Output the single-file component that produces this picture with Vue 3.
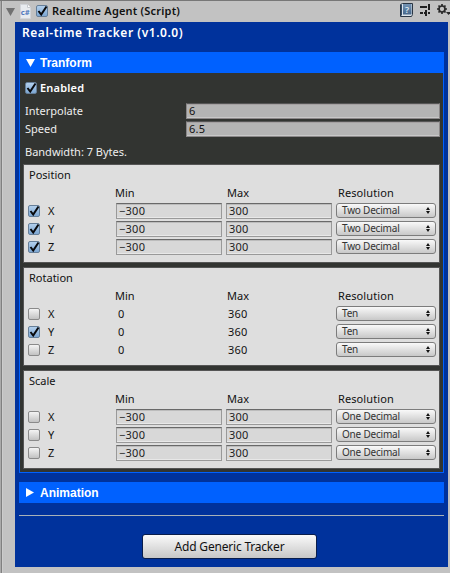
<script setup>
import { ref } from 'vue'

const axes = (on, min, max, resolution) =>
  ['X', 'Y', 'Z'].map((name, i) => ({ name, on: on[i], min, max, resolution }))

const groups = ref([
  { title: 'Position', editable: true, rows: axes([true, true, true], '-300', '300', 'Two Decimal') },
  { title: 'Rotation', editable: false, rows: axes([false, true, false], '0', '360', 'Ten') },
  { title: 'Scale', editable: true, rows: axes([false, false, false], '-300', '300', 'One Decimal') },
])
const settings = [
  { label: 'Interpolate', value: '6' },
  { label: 'Speed', value: '6.5' },
]
const shown = (v) => v.replace('-', '−')
</script>

<template>
  <main class="inspector">
    <header class="component-bar">
      <svg class="fold" width="9" height="8" viewBox="0 0 9 8"><path d="M0 0h9L4.5 8z" fill="#717171" /></svg>
      <svg class="script-icon" width="11" height="15" viewBox="0 0 11 15">
        <path d="M.5 .5h7l3 3v11H.5z" fill="#e8ebef" stroke="#d2d5da" />
        <path d="M7.5 .5v3h3" fill="#fff" stroke="#c5c9ce" />
        <text x="0.8" y="10.8" font-size="7" font-weight="700" textLength="9" lengthAdjust="spacingAndGlyphs" fill="#5279bd">c#</text>
      </svg>
      <span class="check on"><svg width="14" height="14" viewBox="0 0 14 14"><path d="M3.500 7l2.700 3.500L11.500 2.500" /></svg></span>
      <b class="component-name">Realtime Agent (Script)</b>
      <div class="tools">
        <svg width="13" height="14" viewBox="0 0 13 14">
          <defs><linearGradient id="book" x2="0" y2="1"><stop stop-color="#7595b5" /><stop offset="1" stop-color="#456589" /></linearGradient></defs>
          <path d="M.5 1.500l2-1h10v11l-1 2H.5z" fill="#dce4eb" stroke="#2a3644" />
          <path d="M3 1h8.500v10.500H3z" fill="url(#book)" />
          <path d="M1.500 1.500v11" stroke="#304b68" />
          <text x="5" y="9.500" font-size="9" font-weight="600" fill="#dce9f4">?</text>
        </svg>
        <svg width="10" height="12" viewBox="0 0 10 12" fill="#202020">
          <path d="M0 2h7v2H0zM8 0h2v6H8zM0 8h3v2H0zM5 6h2v6H5zM4 8h1v2H4zM8 8h2v2H8z" />
        </svg>
        <svg width="13" height="12" viewBox="0 0 13 12">
          <circle cx="5" cy="5" r="3" fill="none" stroke="#292929" stroke-width="1.700" />
          <path d="M5 0v2M5 8v2M0 5h2M8 5h2M1.500 1.500l1.300 1.300M7.200 7.200l1.300 1.300M1.500 8.500l1.300-1.300M7.200 2.800l1.300-1.300" stroke="#292929" stroke-width="1.700" />
          <path d="M9 8h5l-2.500 3z" fill="#292929" />
        </svg>
      </div>
    </header>

    <div class="tracker">
      <h1>Real-time Tracker (v1.0.0)</h1>
      <section class="module">
        <h2><svg width="9" height="8" viewBox="0 0 9 8"><path d="M0 0h9L4.500 8z" fill="#fff" /></svg><span>Tranform</span></h2>
        <div class="module-body">
          <label class="enabled">
            <span class="check on"><svg width="14" height="14" viewBox="0 0 14 14"><path d="M3.500 7l2.700 3.500L11.500 2.500" /></svg></span>
            <b>Enabled</b>
          </label>
          <div v-for="s in settings" :key="s.label" class="setting">
            <span>{{ s.label }}</span><span class="field">{{ s.value }}</span>
          </div>
          <p class="bandwidth">Bandwidth: 7 Bytes.</p>

          <div class="groups">
            <div v-for="g in groups" :key="g.title" class="group">
              <h3>{{ g.title }}</h3>
              <div class="row heads"><span class="min">Min</span><span class="max">Max</span><span class="res">Resolution</span></div>
              <div v-for="r in g.rows" :key="r.name" class="row">
                <span class="check" :class="{ on: r.on }" @click="r.on = !r.on">
                  <svg v-if="r.on" width="14" height="14" viewBox="0 0 14 14"><path d="M3.500 7l2.700 3.500L11.500 2.500" /></svg>
                </span>
                <span class="axis">{{ r.name }}</span>
                <span :class="g.editable ? 'field' : 'plain'">{{ shown(r.min) }}</span>
                <span :class="g.editable ? 'field' : 'plain'">{{ r.max }}</span>
                <span class="select">{{ r.resolution }}
                  <svg width="4" height="7" viewBox="0 0 4 7"><path d="M0 3l2-3 2 3zM0 4h4L2 7z" fill="#111" /></svg>
                </span>
              </div>
            </div>
          </div>
        </div>
      </section>
      <section class="module closed">
        <h2><svg width="8" height="9" viewBox="0 0 8 9"><path d="M0 0v9l8-4.500z" fill="#fff" /></svg><span>Animation</span></h2>
      </section>
      <hr>
      <button>Add Generic Tracker</button>
    </div>
  </main>
</template>

<style>
body { margin: 0; background: #c2c2c2; }
</style>

<style scoped>
* { box-sizing: border-box; }
h1, h2, h3, p { margin: 0; }
svg { display: block; flex: none; }
.inspector {
  width: 450px; height: 573px; overflow: hidden; background: #c2c2c2;
  border-top: 1px solid #777; padding-left: 15px;
  background-image: linear-gradient(90deg, #aaa 0 1px, #808080 1px 2px, #ccc 2px 3px, transparent 3px);
  font: 11px/18px "Noto Sans", sans-serif; color: #111;
}
.component-bar { height: 21px; margin-left: -9px; display: flex; align-items: center; padding-bottom: 1px; }
.fold { margin-top: 1px; }
.script-icon { margin-left: 5px; margin-right: 5px; }
.component-name { margin-left: 4px; font-weight: 600; font-size: 11px; letter-spacing: .2px; white-space: nowrap; }
.tools { margin-left: auto; display: flex; gap: 7px; align-items: center; padding-bottom: 2px; }
.tracker { width: 433px; height: 545px; padding: 0 4px; background: #00329c; display: flow-root; }
h1 { height: 30px; padding: 2px 0 0 3px; font-size: 12px; line-height: 18px; font-weight: 600; color: #fff; letter-spacing: .54px; }
.module { width: 425px; border: 1px solid #0061ff; border-top: 0; }
h2 { height: 21px; margin: 0 -1px; padding-left: 7px; background: #0061ff; color: #fff; display: flex; align-items: center; gap: 5px; font: bold 12px/21px "Liberation Sans", sans-serif; }
h2 svg + span { padding-top: 1px; }
.module-body { height: 399px; background: #323431; color: #eee; padding: 6px 3px 0; }
.enabled { display: flex; align-items: center; height: 18px; gap: 3px; padding-left: 2px; }
.enabled b { font-weight: 600; color: #fff; letter-spacing: .2px; }
.check { width: 12px; height: 12px; flex: none; border: 1px solid #8a8a8a; border-radius: 2px; background: linear-gradient(#f4f4f4, #c2c2c2); }
.check.on { background: linear-gradient(#b2cfec, #7da7d3); border-color: #667f99; }
.check svg { margin: -2px 0 0 -2px; overflow: visible; }
.check path { fill: none; stroke: #08090c; stroke-width: 2; }
.setting { height: 18px; display: grid; grid-template-columns: 163px 254px; align-items: center; }
.enabled + .setting { margin-top: 5px; }
.setting > span:first-child { padding-left: 2px; }
.field { height: 16px; border: 1px solid #999; border-top: 1px solid #696969; box-shadow: inset 0 1px 0 #bcbcbc, inset 0 -1px 0 #e8e8e8; background: #d8d8d8; line-height: 14px; padding-left: 2px; color: #222; letter-spacing: .25px; }
.setting .field { background: #b4b4b4; border-color: #8a8788; border-top-color: #555; box-shadow: inset 0 1px 0 #a5a1a2, inset 0 -1px 0 #c8c8c8; padding-left: 2px; color: #111; }
.bandwidth { height: 18px; margin-top: 5px; padding-left: 2px; }
.groups { display: flex; flex-direction: column; gap: 4px; margin-top: 3px; }
.group { height: 99px; width: 417px; border: 1px solid #555; background: #dedede; color: #111; padding: 1px 0 0 4px; }
h3 { font-size: 11px; line-height: 18px; height: 18px; font-weight: 400; padding-left: 1px; }
.row { height: 18px; display: grid; grid-template-columns: 12px 68px 106px 106px 100px; column-gap: 4px; align-items: center; }
.heads .min { grid-column: 3; margin-left: -1px; }
.heads .max { padding-left: 1px; }
.heads .res { padding-left: 2px; letter-spacing: .1px; }
.row > .check + .axis { padding-left: 4px; }
.plain { padding-left: 2px; letter-spacing: .25px; }
.select { height: 15px; margin-bottom: 1px; border: 1px solid #7c7c7c; border-radius: 3px; background: linear-gradient(#f9f9f9, #c8c8c8); display: flex; justify-content: space-between; align-items: center; padding: 0 5px 0 5px; font-size: 10px; line-height: 13px; letter-spacing: -.2px; color: #333; }
.closed { margin-top: 9px; border: 0; }
.closed h2 { margin: 0; gap: 6px; }
hr { width: 425px; height: 1px; border: 0; margin: 12px 0 0; background: #a7b1b8; }
button { display: block; margin: 18px 0 0 123px; width: 175px; height: 25px; padding: 0; border: 1px solid #091d4b; border-radius: 3px; background: linear-gradient(#fafafa, #c7c7c7); font: 12px/22px "Noto Sans", sans-serif; letter-spacing: -.2px; color: #111; }
</style>
